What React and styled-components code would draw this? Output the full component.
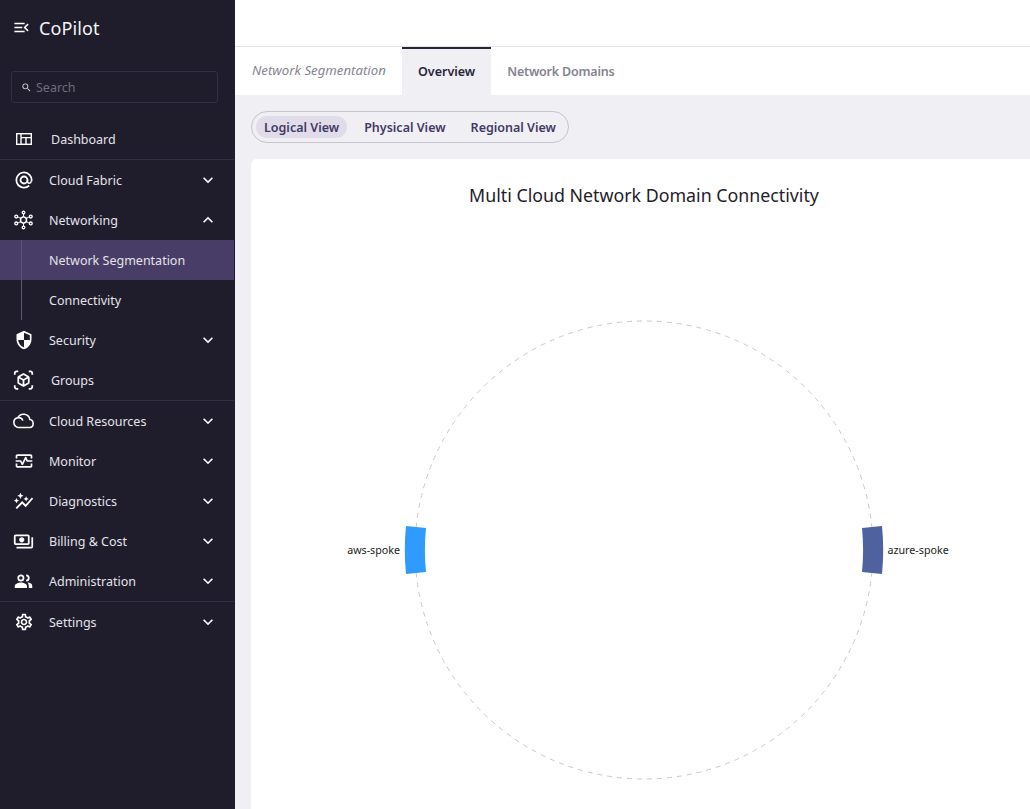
import React from 'react';
import styled, { createGlobalStyle } from 'styled-components';
import {
  MdMenuOpen,
  MdSearch,
  MdKeyboardArrowDown,
  MdKeyboardArrowUp,
  MdSecurity,
  MdOutlineViewInAr,
  MdOutlineMonitorHeart,
  MdOutlineAutoGraph,
  MdOutlinePayments,
  MdOutlineSettings,
} from 'react-icons/md';

const GlobalStyle = createGlobalStyle`
  html, body {
    margin: 0;
    padding: 0;
    height: 100%;
    overflow: hidden;
    font-family: "Noto Sans", "Open Sans", sans-serif;
  }
  #root { height: 100%; }
`;

function DashboardIcon() {
  return (
    <svg viewBox="0 0 16 12" width="16" height="12" fill="none" stroke="currentColor" strokeWidth="1.4">
      <rect x="0.7" y="0.7" width="14.6" height="10.6" />
      <path d="M5 1v10M5 4.6h10M10 4.6V11" />
    </svg>
  );
}

function FabricIcon() {
  return (
    <svg viewBox="0 0 18 18" width="18" height="18" fill="none" stroke="currentColor" strokeWidth="1.7">
      <path d="M14.2 14.6A7.6 7.6 0 1 1 16.5 10.4" />
      <circle cx="9" cy="9" r="3.5" strokeWidth="1.8" />
      <path d="M12.5 8.6v1.6c0 2.4 2.6 2.8 4 .2" strokeWidth="1.5" />
    </svg>
  );
}

function HubIcon() {
  return (
    <svg viewBox="0 0 22 20" width="22" height="20" fill="none" stroke="currentColor" strokeWidth="1.4">
      <path d="M11 6.5 14 8.2v3.6L11 13.5 8 11.8V8.2Z" strokeWidth="1.6" />
      <path d="M11 3.5v3M14 8.2l2.6-1.2M14 11.8l2.6 1.2M8 8.2 5.4 7M8 11.8 5.4 13M11 13.5v3" strokeWidth="1" />
      <circle cx="11" cy="2.2" r="1.4" />
      <circle cx="18.6" cy="6.4" r="1.5" />
      <circle cx="18.6" cy="13.6" r="1.5" />
      <circle cx="3.4" cy="6.4" r="1.5" />
      <circle cx="3.4" cy="13.6" r="1.5" />
      <circle cx="11" cy="17.8" r="1.4" />
    </svg>
  );
}

function CloudIcon() {
  return (
    <svg viewBox="0 0 24 18" width="21" height="16" fill="none" stroke="currentColor" strokeWidth="1.8">
      <path d="M19.3 7.2A7.4 7.4 0 0 0 5.5 5.2 5.4 5.4 0 0 0 1 10.8c0 3 2.4 5.7 5.5 5.7H19c2.2 0 4-1.9 4-4.6 0-2.4-1.6-4.5-3.7-4.7Z" />
      <path d="M5.6 5.2c2.6-.3 5 1 5.6 3.4" />
    </svg>
  );
}

function PeopleIcon() {
  return (
    <svg viewBox="0 0 24 24" width="21" height="21" fill="currentColor">
      <circle cx="9" cy="8" r="3" fill="none" stroke="currentColor" strokeWidth="2" />
      <path d="M15 5a3 3 0 0 1 0 6" fill="none" stroke="currentColor" strokeWidth="2" />
      <path d="M2 19.5V17c0-2.6 4.4-4 7-4s7 1.4 7 4v2.5Z" />
      <path d="M17.6 13.2c2.2.4 4.4 1.5 4.4 3.8v2.5h-4V17c0-1.5-.5-2.8-1.2-3.8Z" />
    </svg>
  );
}

function ShieldGlyph({ size }) {
  return <MirroredShield size={size} />;
}

const NAV = [
  { label: 'Dashboard', icon: <DashboardIcon />, wide: true, divider: true },
  { label: 'Cloud Fabric', icon: <FabricIcon />, arrow: 'down' },
  { label: 'Networking', icon: <HubIcon />, arrow: 'up' },
  { label: 'Network Segmentation', sub: true, active: true },
  { label: 'Connectivity', sub: true },
  { label: 'Security', icon: <ShieldGlyph size={20} />, arrow: 'down' },
  { label: 'Groups', icon: <MdOutlineViewInAr size={22} />, wide: true, divider: true },
  { label: 'Cloud Resources', icon: <CloudIcon />, arrow: 'down' },
  { label: 'Monitor', icon: <MdOutlineMonitorHeart size={20} />, arrow: 'down' },
  { label: 'Diagnostics', icon: <MdOutlineAutoGraph size={21} />, arrow: 'down' },
  { label: 'Billing & Cost', icon: <MdOutlinePayments size={21} />, arrow: 'down' },
  { label: 'Administration', icon: <PeopleIcon />, arrow: 'down', divider: true },
  { label: 'Settings', icon: <MdOutlineSettings size={20} />, arrow: 'down' },
];

function Chord() {
  const cx = 393;
  const cy = 342;
  const r = 229;
  return (
    <svg viewBox="0 0 786 651" width="786" height="651">
      <circle cx={cx} cy={cy} r={r} fill="none" stroke="#c8c8d0" strokeWidth="1" strokeDasharray="5 5" strokeDashoffset="8.4" />
      <path d="M155 318 L175 320 A 222 222 0 0 0 175 364 L155 366 A 240 240 0 0 1 155 318 Z" fill="#2f9bff" />
      <path d="M631 318 L611 320 A 222 222 0 0 1 611 364 L631 366 A 240 240 0 0 0 631 318 Z" fill="#4f629f" />
      <ChordLabel x="149" y="346" textAnchor="end">aws-spoke</ChordLabel>
      <ChordLabel x="636.5" y="346">azure-spoke</ChordLabel>
    </svg>
  );
}

export default function App() {
  return (
    <>
      <GlobalStyle />
      <Page>
        <Sidebar>
          <Brand>
            <MdMenuOpen size={19} />
            <BrandName>CoPilot</BrandName>
          </Brand>
          <SearchBox>
            <MdSearch size={11} />
            <SearchInput placeholder="Search" readOnly />
          </SearchBox>
          <Nav>
            {NAV.map((item) => (
              <NavRow key={item.label} $active={item.active} $divider={item.divider}>
                {item.sub ? <SubLine /> : <NavIcon>{item.icon}</NavIcon>}
                <NavLabel $wide={item.wide} $sub={item.sub}>{item.label}</NavLabel>
                {item.arrow === 'down' && <Arrow><MdKeyboardArrowDown size={20} /></Arrow>}
                {item.arrow === 'up' && <Arrow><MdKeyboardArrowUp size={20} /></Arrow>}
              </NavRow>
            ))}
          </Nav>
        </Sidebar>
        <Main>
          <TopBar />
          <Tabs>
            <Crumb>Network Segmentation</Crumb>
            <Tab $active>Overview</Tab>
            <Tab>Network Domains</Tab>
          </Tabs>
          <Content>
            <Pills>
              <Pill $active>Logical View</Pill>
              <Pill>Physical View</Pill>
              <Pill>Regional View</Pill>
            </Pills>
            <Card>
              <CardTitle>Multi Cloud Network Domain Connectivity</CardTitle>
              <Chord />
            </Card>
          </Content>
        </Main>
      </Page>
    </>
  );
}

const MirroredShield = styled(MdSecurity)`
  transform: scaleX(-1);
`;

const Page = styled.div`
  display: flex;
  width: 1030px;
  height: 809px;
  overflow: hidden;
  background: #f0eff4;
`;

const Sidebar = styled.aside`
  flex: none;
  width: 235px;
  box-sizing: border-box;
  padding-right: 1px;
  background: #1f1c2c;
  color: #fff;
`;

const Brand = styled.div`
  display: flex;
  align-items: center;
  gap: 8px;
  height: 55px;
  padding-left: 12px;
`;

const BrandName = styled.span`
  font-size: 18px;
  letter-spacing: 0.1px;
  color: #f4f4f6;
`;

const SearchBox = styled.div`
  display: flex;
  align-items: center;
  gap: 4px;
  box-sizing: border-box;
  width: 207px;
  height: 32px;
  margin: 16px 0 16px 11px;
  padding-left: 9px;
  border: 1px solid #322e45;
  border-radius: 3px;
  color: #d8d8dd;
`;

const SearchInput = styled.input`
  flex: 1;
  min-width: 0;
  padding: 0;
  border: 0;
  outline: 0;
  background: transparent;
  font: 12.5px "Noto Sans", sans-serif;
  color: #6f6c7c;
  &::placeholder { color: #6f6c7c; opacity: 1; }
`;

const Nav = styled.nav`
  display: flex;
  flex-direction: column;
`;

const NavRow = styled.div`
  position: relative;
  display: flex;
  align-items: center;
  flex: none;
  height: 40px;
  padding-left: 13px;
  background: ${(p) => (p.$active ? '#483d66' : 'transparent')};
  border-bottom: ${(p) => (p.$divider ? '1px solid #322e45' : '0')};
`;

const NavIcon = styled.span`
  display: flex;
  align-items: center;
  justify-content: center;
  width: 21px;
  height: 22px;
  color: #fff;
`;

const SubLine = styled.span`
  position: absolute;
  left: 21px;
  top: 0;
  bottom: 0;
  width: 1px;
  background: #5c5670;
`;

const NavLabel = styled.span`
  margin-left: ${(p) => (p.$sub ? '36px' : p.$wide ? '17px' : '15px')};
  font-size: 12.5px;
  color: #e4e3e9;
`;

const Arrow = styled.span`
  display: flex;
  margin-left: auto;
  margin-right: 16px;
  color: #fff;
`;

const Main = styled.main`
  flex: 1;
  min-width: 0;
  display: flex;
  flex-direction: column;
  overflow: hidden;
`;

const TopBar = styled.div`
  flex: none;
  height: 46px;
  background: #fff;
  border-bottom: 1px solid #e3e3e6;
`;

const Tabs = styled.div`
  flex: none;
  display: flex;
  align-items: stretch;
  height: 48px;
  background: #fff;
`;

const Crumb = styled.span`
  display: flex;
  align-items: center;
  width: 167px;
  padding: 0 0 2px 17px;
  box-sizing: border-box;
  font-size: 13.2px;
  font-style: italic;
  color: #85838f;
`;

const Tab = styled.div`
  display: flex;
  align-items: center;
  padding: 0 16px 2px;
  box-sizing: border-box;
  font-size: 12.5px;
  font-weight: 600;
  letter-spacing: ${(p) => (p.$active ? '0' : '-0.2px')};
  color: ${(p) => (p.$active ? '#27243a' : '#85838f')};
  background: ${(p) => (p.$active ? '#f0eff4' : '#fff')};
  border-top: 2px solid ${(p) => (p.$active ? '#27243a' : 'transparent')};
`;

const Content = styled.div`
  flex: 1;
  min-height: 0;
  padding: 16px 0 0 16px;
  background: #f0eff4;
`;

const Pills = styled.div`
  display: inline-flex;
  align-items: center;
  gap: 9px;
  box-sizing: border-box;
  height: 32px;
  padding: 0 4px;
  border: 1px solid #c6c4cf;
  border-radius: 16px;
`;

const Pill = styled.span`
  display: flex;
  align-items: center;
  height: 22px;
  padding: 0 8px;
  border-radius: 11px;
  font-size: 12.5px;
  font-weight: 600;
  color: #423a64;
  background: ${(p) => (p.$active ? '#e0dcea' : 'transparent')};
`;

const Card = styled.section`
  width: 786px;
  height: 700px;
  margin-top: 16px;
  border-radius: 6px 0 0 0;
  background: #fff;
  text-align: center;
`;

const CardTitle = styled.h2`
  margin: 0;
  padding-top: 24px;
  line-height: 25px;
  font-size: 17.8px;
  font-weight: 400;
  color: #1f1c2c;
`;

const ChordLabel = styled.text`
  font-size: 10.7px;
  fill: #222;
`;
